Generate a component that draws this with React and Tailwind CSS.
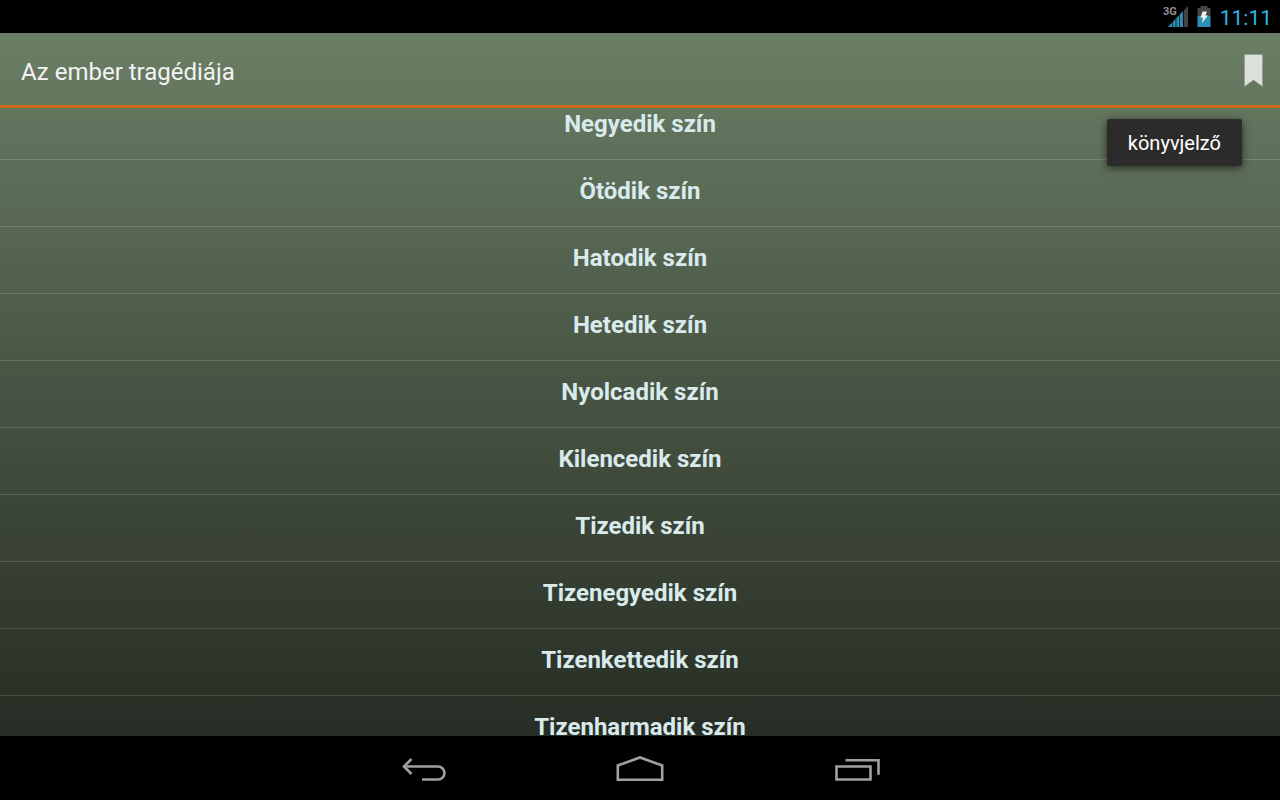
const scenes = [
  'Negyedik szín',
  'Ötödik szín',
  'Hatodik szín',
  'Hetedik szín',
  'Nyolcadik szín',
  'Kilencedik szín',
  'Tizedik szín',
  'Tizenegyedik szín',
  'Tizenkettedik szín',
  'Tizenharmadik szín',
];

function StatusBar() {
  return (
    <div className="flex h-[33px] shrink-0 items-center justify-end bg-black pr-2 text-[#33b5e5]">
      <svg className="h-8 w-7" viewBox="0 0 28 32" role="img" aria-label="3G">
        <path d="M26 5V26H6Z" fill="#444" />
        <path d="M21 10.300V26H6Z" fill="#2d8fb5" />
        <path d="M10.500 21v5M14 17v9M17.500 13v13" stroke="#0c2833" strokeWidth="0.900" />
        <path d="M21.400 9v17" stroke="#000" strokeWidth="0.800" />
        <text x="1" y="14" fill="#909090" fontSize="11" fontWeight="700" fontFamily="Roboto, sans-serif">3G</text>
      </svg>
      <svg className="ml-1.5 h-8 w-4" viewBox="0 0 16 32" aria-hidden="true">
        <path d="M4.500 5h7v2h3v8h-13v-8h3Z" fill="#454545" />
        <path d="M1.500 15h13v11h-13Z" fill="#2d8fb5" />
        <path d="M6.500 10.500h4.500l-1.500 4h2.500L6 22l1-5.500H4.500Z" fill="#eee" />
      </svg>
      <time className="ml-2 pt-0.5 text-[21px] leading-8">11:11</time>
    </div>
  );
}

function NavigationBar() {
  const button = 'flex h-16 w-[217px] items-center justify-center';
  return (
    <nav className="flex h-16 shrink-0 justify-center bg-black text-[#a0a0a0]">
      <button className={button} aria-label="Vissza">
        <svg className="h-16 w-16" viewBox="0 0 64 64" fill="none" stroke="currentColor" strokeWidth="2.600">
          <path d="M12.500 30.500H47a6.500 6.500 0 0 1 0 13H31" />
          <path d="M20.500 23l-7.500 7.500 7.500 7.500" />
        </svg>
      </button>
      <button className={button} aria-label="Kezdőképernyő">
        <svg className="h-16 w-16" viewBox="0 0 64 64" fill="none" stroke="currentColor" strokeWidth="2.600">
          <path d="M9.800 43.700V29.500L32 21.500 54.200 29.500V43.700Z" />
        </svg>
      </button>
      <button className={button} aria-label="Legutóbbi alkalmazások">
        <svg className="h-16 w-16" viewBox="0 0 64 64" fill="none" stroke="currentColor" strokeWidth="2.600">
          <path d="M11.500 30.500h34v13h-34Z" />
          <path d="M20.500 24.300h33v14.500" />
        </svg>
      </button>
    </nav>
  );
}

export default function App() {
  return (
    <div className="flex h-screen flex-col overflow-hidden bg-black font-['Roboto',sans-serif]">
      <StatusBar />
      <div className="flex min-h-0 flex-1 flex-col bg-linear-to-b from-[#6b7f65] to-[#272d24]">
        <header className="relative flex h-[75px] shrink-0 items-center justify-between border-b-3 border-[#c96c15] pt-1.5 pr-4 pl-[21px]">
          <h1 className="text-2xl text-[#f3f3f3]">Az ember tragédiája</h1>
          <button aria-label="könyvjelző" aria-describedby="bookmark-tip">
            <svg className="h-9 w-[21px]" viewBox="0 0 21 36">
              <path d="M1.500 0.500h18v32l-9-6.500-9 6.500Z" fill="#dbe0d9" stroke="#8f9d8b" strokeWidth="0.700" />
            </svg>
          </button>
          <div
            id="bookmark-tip"
            role="tooltip"
            className="absolute top-[86px] right-[38px] z-10 flex h-[47px] items-center rounded-xs bg-[#2b2b2b] px-[21px] text-xl text-white shadow-[0_2px_8px_rgba(0,0,0,0.6)]"
          >
            könyvjelző
          </div>
        </header>
        <main className="min-h-0 flex-1 overflow-hidden">
          <ul className="-mt-[15px]">
            {scenes.map((scene) => (
              <li key={scene} className="border-b border-white/15">
                <button className="flex h-[66px] w-full items-center justify-center pb-1 text-2xl font-bold text-[#d9eaed]">
                  {scene}
                </button>
              </li>
            ))}
          </ul>
        </main>
      </div>
      <NavigationBar />
    </div>
  );
}
